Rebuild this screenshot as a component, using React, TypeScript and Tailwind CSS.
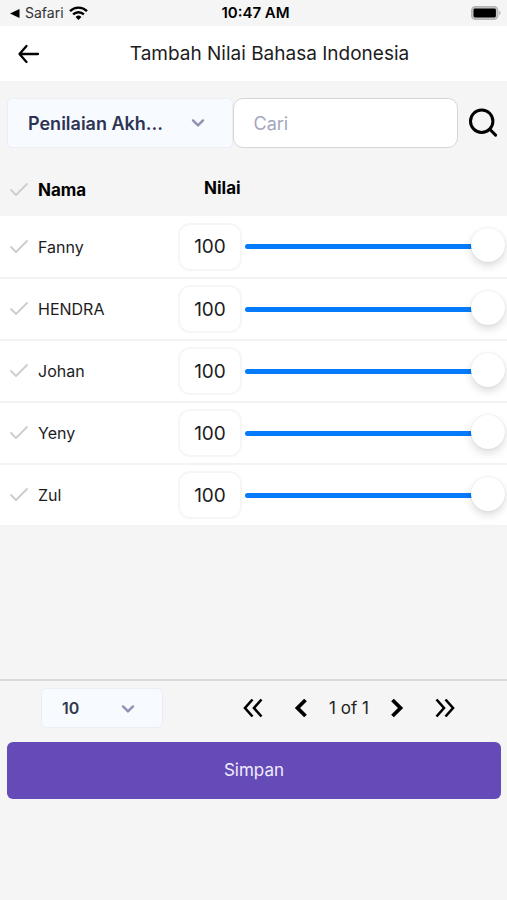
import { useState } from "react";
import { Check } from "lucide-react";

type Student = { name: string; score: number; checked: boolean };

const STUDENTS: Student[] = ["Fanny", "HENDRA", "Johan", "Yeny", "Zul"].map((name) => ({
  name,
  score: 100,
  checked: false,
}));

const SLIDER =
  "block h-[34px] min-w-0 flex-1 cursor-pointer appearance-none bg-transparent [&::-webkit-slider-runnable-track]:h-[5px] [&::-webkit-slider-runnable-track]:rounded-full [&::-webkit-slider-runnable-track]:bg-[linear-gradient(to_right,#047bfb_var(--fill),#e4e4e6_var(--fill))] [&::-webkit-slider-runnable-track]:bg-[length:calc(100%-6px)_100%] [&::-webkit-slider-runnable-track]:bg-no-repeat [&::-webkit-slider-thumb]:-mt-4 [&::-webkit-slider-thumb]:size-[34px] [&::-webkit-slider-thumb]:appearance-none [&::-webkit-slider-thumb]:rounded-full [&::-webkit-slider-thumb]:bg-white [&::-webkit-slider-thumb]:shadow-[0_4px_9px_rgba(0,0,0,0.14),0_0_2px_rgba(0,0,0,0.1)]";

function StatusBar() {
  return (
    <div className="grid h-[26px] grid-cols-[1fr_auto_1fr] items-center pr-[6px] pl-[10px] text-[15px] leading-5">
      <div className="flex items-center gap-[5px] text-[#333]">
        <svg width="10" height="9" viewBox="0 0 10 9" aria-hidden="true">
          <path d="M0 4.5 9.5 0v9z" fill="#000" />
        </svg>
        <span className="text-[14px]">Safari</span>
        <svg width="19" height="14" viewBox="0 0 19 14" fill="none" stroke="#000" strokeWidth="2.4" aria-hidden="true">
          <path d="M1 5.1a12.2 12.2 0 0 1 17 0" />
          <path d="M4.1 8.4a7.7 7.7 0 0 1 10.8 0" />
          <path d="M6.6 11 9.5 14l2.9-3a4.1 4.1 0 0 0-5.8 0z" fill="#000" stroke="none" />
        </svg>
      </div>
      <span className="font-semibold">10:47 AM</span>
      <svg className="justify-self-end" width="30" height="14" viewBox="0 0 30 14" aria-hidden="true">
        <rect x="0.7" y="0.7" width="26" height="12.6" rx="3.6" fill="#c8c8c8" stroke="#b4b4b4" strokeWidth="1.4" />
        <rect x="2.5" y="2.5" width="22.4" height="9" rx="1.4" fill="#000" />
        <path d="M28.2 4.8c1.8.6 1.8 3.8 0 4.4z" fill="#b4b4b4" />
      </svg>
    </div>
  );
}

function Caret({ className }: { className: string }) {
  return (
    <svg
      className={className}
      width="14"
      height="10"
      viewBox="0 0 14 10"
      fill="none"
      stroke="#8f93b3"
      strokeWidth="2.4"
      strokeLinecap="round"
      strokeLinejoin="round"
      aria-hidden="true"
    >
      <path d="m2 2.4 5 5 5-5" />
    </svg>
  );
}

function PagerButton({ label, path, width }: { label: string; path: string; width: number }) {
  return (
    <button type="button" aria-label={label} className="flex h-10 w-12 items-center justify-center">
      <svg width="20" height="20" viewBox="0 0 20 20" fill="none" stroke="#000" strokeWidth={width} aria-hidden="true">
        <path d={path} />
      </svg>
    </button>
  );
}

export default function App() {
  const [students, setStudents] = useState(STUDENTS);
  const [query, setQuery] = useState("");

  const update = (name: string, patch: Partial<Student>) =>
    setStudents((list) => list.map((s) => (s.name === name ? { ...s, ...patch } : s)));

  const allChecked = students.every((s) => s.checked);
  const visible = students.filter((s) => s.name.toLowerCase().includes(query.toLowerCase()));

  return (
    <div className="flex min-h-screen flex-col bg-[#f5f5f5] font-['Inter','Liberation_Sans',sans-serif] text-black">
      <StatusBar />

      <header className="flex h-[55px] items-center bg-white pr-2 pl-[17px]">
        <button type="button" aria-label="Kembali">
          <svg
            width="23"
            height="20"
            viewBox="0 0 23 20"
            fill="none"
            stroke="#000"
            strokeWidth="2.3"
            strokeLinecap="round"
            strokeLinejoin="round"
          >
            <path d="M2.5 10h18.5M9.5 2 2.5 10l7 8" />
          </svg>
        </button>
        <h1 className="flex-1 text-center text-[19px] leading-6 text-[#1c1c1e]">Tambah Nilai Bahasa Indonesia</h1>
      </header>

      <main className="flex-1">
        <div className="grid grid-cols-[1fr_1fr_49px] pt-[17px] pb-4 pl-[7px]">
          <div className="relative">
            <select
              aria-label="Jenis penilaian"
              className="h-[50px] w-full appearance-none rounded-[5px] border border-[#ebeef3] bg-[#f7faff] pr-12 pl-5 text-[18px] font-semibold text-[#2e3354]"
            >
              <option>Penilaian Akh...</option>
            </select>
            <Caret className="pointer-events-none absolute top-5 right-7" />
          </div>
          <input
            type="text"
            aria-label="Cari"
            placeholder="Cari"
            value={query}
            onChange={(e) => setQuery(e.target.value)}
            className="h-[50px] w-full rounded-[10px] border border-[#d6d6d6] bg-white px-5 text-[18px] placeholder:text-[#a3a7bd]"
          />
          <button type="button" aria-label="Cari siswa" className="flex items-center justify-center">
            <svg width="30" height="30" viewBox="0 0 30 30" fill="none" stroke="#000" strokeWidth="3" strokeLinecap="round">
              <circle cx="13.7" cy="13.2" r="11.2" />
              <path d="m21.8 21.3 5.8 5.8" />
            </svg>
          </button>
        </div>

        <table className="w-full table-fixed border-collapse text-left text-[16px] leading-6">
          <thead>
            <tr className="h-[52px] text-[17px]">
              <th className="w-[38px] pl-[7px]">
                <label className="block">
                  <input
                    type="checkbox"
                    aria-label="Pilih semua"
                    checked={allChecked}
                    onChange={(e) => setStudents((list) => list.map((s) => ({ ...s, checked: e.target.checked })))}
                    className="peer sr-only"
                  />
                  <Check size={24} strokeWidth={1.8} className="text-[#cdcdcd] peer-checked:text-[#047bfb]" />
                </label>
              </th>
              <th className="w-[140px] font-bold">Nama</th>
              <th className="pb-1 pl-[26px] font-bold">Nilai</th>
            </tr>
          </thead>
          <tbody>
            {visible.map((s) => (
              <tr key={s.name} className="h-[62px] border-b-2 border-[#f3f3f3] bg-white">
                <td className="pl-[7px]">
                  <label className="block">
                    <input
                      type="checkbox"
                      aria-label={`Pilih ${s.name}`}
                      checked={s.checked}
                      onChange={(e) => update(s.name, { checked: e.target.checked })}
                      className="peer sr-only"
                    />
                    <Check size={24} strokeWidth={1.8} className="text-[#cdcdcd] peer-checked:text-[#047bfb]" />
                  </label>
                </td>
                <td className="text-[#1c1c1e]">{s.name}</td>
                <td>
                  <div className="flex items-center gap-[3px] pr-[2px]">
                    <input
                      type="text"
                      inputMode="numeric"
                      aria-label={`Nilai ${s.name}`}
                      value={s.score}
                      onChange={(e) => update(s.name, { score: Math.min(100, Number(e.target.value) || 0) })}
                      className="h-12 w-16 rounded-xl border-2 border-[#f6f6f6] bg-white text-center text-[19px] text-[#1c1c1e]"
                    />
                    <input
                      type="range"
                      min={0}
                      max={100}
                      aria-label={`Geser nilai ${s.name}`}
                      value={s.score}
                      onChange={(e) => update(s.name, { score: Number(e.target.value) })}
                      className={SLIDER}
                      style={{ "--fill": `${s.score}%` } as React.CSSProperties}
                    />
                  </div>
                </td>
              </tr>
            ))}
          </tbody>
        </table>
      </main>

      <footer className="border-t-2 border-[#d9d9d9] pb-[101px]">
        <div className="flex items-center justify-between pt-[7px] pr-[38px] pl-[41px]">
          <div className="relative w-[122px]">
            <select
              aria-label="Baris per halaman"
              className="h-10 w-full appearance-none rounded-[5px] border border-[#ebeef3] bg-[#f7faff] pl-5 text-[16px] font-semibold text-[#34374a]"
            >
              <option>10</option>
              <option>25</option>
              <option>50</option>
            </select>
            <Caret className="pointer-events-none absolute top-4 right-7" />
          </div>
          <nav aria-label="Halaman" className="flex items-center">
            <PagerButton label="Halaman pertama" path="M9.5 1.5 2 10l7.5 8.5M18.5 1.5 11 10l7.5 8.5" width={2.6} />
            <PagerButton label="Sebelumnya" path="M14.5 2 6.5 10l8 8" width={3.8} />
            <span className="w-12 text-center text-[17px] leading-6 whitespace-nowrap text-[#222]">1 of 1</span>
            <PagerButton label="Berikutnya" path="m5.5 2 8 8-8 8" width={3.8} />
            <PagerButton label="Halaman terakhir" path="m1.5 1.5 7.5 8.5-7.5 8.5M10.5 1.5 18 10l-7.5 8.5" width={2.6} />
          </nav>
        </div>
        <div className="pt-[14px] pr-[6px] pl-[7px]">
          <button type="button" className="h-[57px] w-full rounded-md bg-[#644bb8] text-[17px] text-[#f0ecfb]">
            Simpan
          </button>
        </div>
      </footer>
    </div>
  );
}
